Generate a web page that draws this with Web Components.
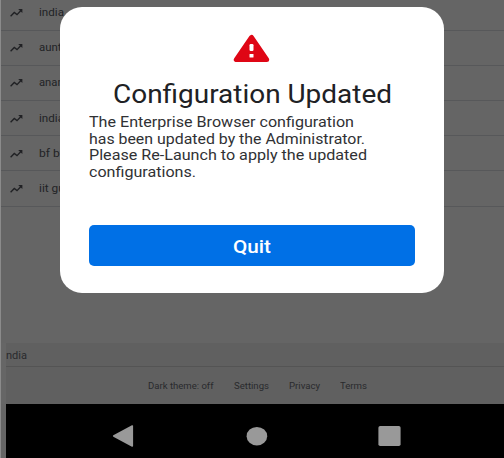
<!DOCTYPE html>
<html lang="en">
<head>
<meta charset="utf-8">
<title>Configuration Updated</title>
<style>
html,body{margin:0;width:504px;height:458px;overflow:hidden;background:#656565;font-family:Roboto,"Liberation Sans",sans-serif}
</style>
</head>
<body>
<kiosk-screen></kiosk-screen>
<script>
// Text run stretched horizontally to the width given in its "w" attribute.
class FitText extends HTMLElement{
  connectedCallback(){
    if(this.shadowRoot)return;
    const r=this.attachShadow({mode:'open'});
    r.innerHTML=`<style>:host{display:block;white-space:nowrap;flex:none}span{display:inline-block;transform-origin:0 50%}</style><span><slot></slot></span>`;
    const w=+this.getAttribute('w'),s=r.querySelector('span');
    this.style.width=w+'px';
    s.style.transform=`scaleX(${w/s.getBoundingClientRect().width})`;
  }
}
class SuggestionRow extends HTMLElement{
  connectedCallback(){
    if(this.shadowRoot)return;
    this.attachShadow({mode:'open'}).innerHTML=`<style>
    :host{display:flex;align-items:center;height:35.2px;box-sizing:border-box;border-bottom:1px solid #57585a;padding:1px 0 0 8px;color:#222325;font-size:11px;line-height:14px}
    svg{width:15px;height:10px;margin-right:15px;flex:none}
    </style><svg viewBox="0 0 15 10"><path d="M1.6 8.3 5.3 4.5 8 6.6 12.2 2.2" fill="none" stroke="#202124" stroke-width="1.35"/><path d="M9.2 1h4.2v3.9z" fill="#202124"/></svg><fit-text w="${this.getAttribute('w')}">${this.getAttribute('label')}</fit-text>`;
  }
}
class SuggestionList extends HTMLElement{
  connectedCallback(){
    if(this.shadowRoot)return;
    this.attachShadow({mode:'open'}).innerHTML=`<style>:host{display:block;margin-top:-4.5px}</style>
    <suggestion-row label="india" w="25"></suggestion-row>
    <suggestion-row label="aunty" w="28"></suggestion-row>
    <suggestion-row label="anand" w="31"></suggestion-row>
    <suggestion-row label="india" w="25"></suggestion-row>
    <suggestion-row label="bf bf" w="25"></suggestion-row>
    <suggestion-row label="iit guwahati" w="61"></suggestion-row>`;
  }
}
class PageFooter extends HTMLElement{
  connectedCallback(){
    if(this.shadowRoot)return;
    this.attachShadow({mode:'open'}).innerHTML=`<style>
    :host{display:block;color:#292a2d}
    .place{height:24px;box-sizing:border-box;border-bottom:1px solid #545454;font-size:11px;line-height:25px;margin-left:5px}
    nav{height:37px;display:flex;gap:20px;padding-left:147px;font-size:9px;line-height:38px}
    </style><div class="place"><fit-text w="21">ndia</fit-text></div>
    <nav><fit-text w="65.5">Dark theme: off</fit-text><fit-text w="35">Settings</fit-text><fit-text w="31">Privacy</fit-text><fit-text w="27">Terms</fit-text></nav>`;
  }
}
class NavBar extends HTMLElement{
  connectedCallback(){
    if(this.shadowRoot)return;
    this.attachShadow({mode:'open'}).innerHTML=`<style>
    :host{display:block;height:54px;margin-left:5px;background:#000}
    svg{display:block;width:498px;height:54px}
    </style><svg viewBox="6 404 498 54" fill="#999"><path d="M113.7 436 132.3 426v20z" stroke="#999" stroke-width="1.6" stroke-linejoin="round"/><ellipse cx="256.9" cy="436.2" rx="10.3" ry="9.3"/><rect x="378.4" y="426" width="22.2" height="20" rx="1.8"/></svg>`;
  }
}
class AlertDialog extends HTMLElement{
  connectedCallback(){
    if(this.shadowRoot)return;
    this.attachShadow({mode:'open'}).innerHTML=`<style>
    :host{position:absolute;left:60px;top:7px;width:384px;height:286px;box-sizing:border-box;padding:27px 29px 0;background:#fff;border-radius:22px;color:#202124}
    svg{display:block;width:38px;height:31px;margin:0 auto 0 143px}
    .title{font-size:25.5px;line-height:32px;margin:13px 0 0 24px}
    .body{margin-top:5px;font-size:14.5px;line-height:16.6px;color:#303134}
    button{display:flex;justify-content:center;align-items:center;width:326px;height:41px;margin:44px 0 0;padding:2px 0 0;border:0;border-radius:5px;background:#0070e6;color:#fff;font:500 18px/24px Roboto,"Liberation Sans",sans-serif}
    button fit-text{margin-right:5px}
    </style>
    <svg viewBox="0 0 38 31"><path d="M19.5 3.5 4.3 25.6H34.7z" fill="#df0615" stroke="#df0615" stroke-width="5" stroke-linejoin="round"/><rect x="17.5" y="10" width="4" height="7" rx="1.2" fill="#fff"/><rect x="17.5" y="20" width="4" height="3.6" rx=".5" fill="#fff"/></svg>
    <fit-text class="title" w="279">Configuration Updated</fit-text>
    <div class="body"><fit-text w="265">The Enterprise Browser configuration</fit-text><fit-text w="276">has been updated by the Administrator.</fit-text><fit-text w="278">Please Re-Launch to apply the updated</fit-text><fit-text w="107">configurations.</fit-text></div>
    <button><fit-text w="38">Quit</fit-text></button>`;
  }
}
class KioskScreen extends HTMLElement{
  connectedCallback(){
    this.attachShadow({mode:'open'}).innerHTML=`<style>
    :host{display:flex;flex-direction:column;position:relative;width:504px;height:458px;box-sizing:border-box;border-left:1px solid #8b8b8b;overflow:hidden;background:#656565}
    alert-dialog{margin-left:-1px}
    page-footer{margin-top:auto;background:linear-gradient(90deg,#666 5px,#606060 5px)}
    </style><suggestion-list></suggestion-list><page-footer></page-footer><nav-bar></nav-bar><alert-dialog></alert-dialog>`;
  }
}
customElements.define('fit-text',FitText);
customElements.define('suggestion-row',SuggestionRow);
customElements.define('suggestion-list',SuggestionList);
customElements.define('page-footer',PageFooter);
customElements.define('nav-bar',NavBar);
customElements.define('alert-dialog',AlertDialog);
customElements.define('kiosk-screen',KioskScreen);
</script>
</body>
</html>
